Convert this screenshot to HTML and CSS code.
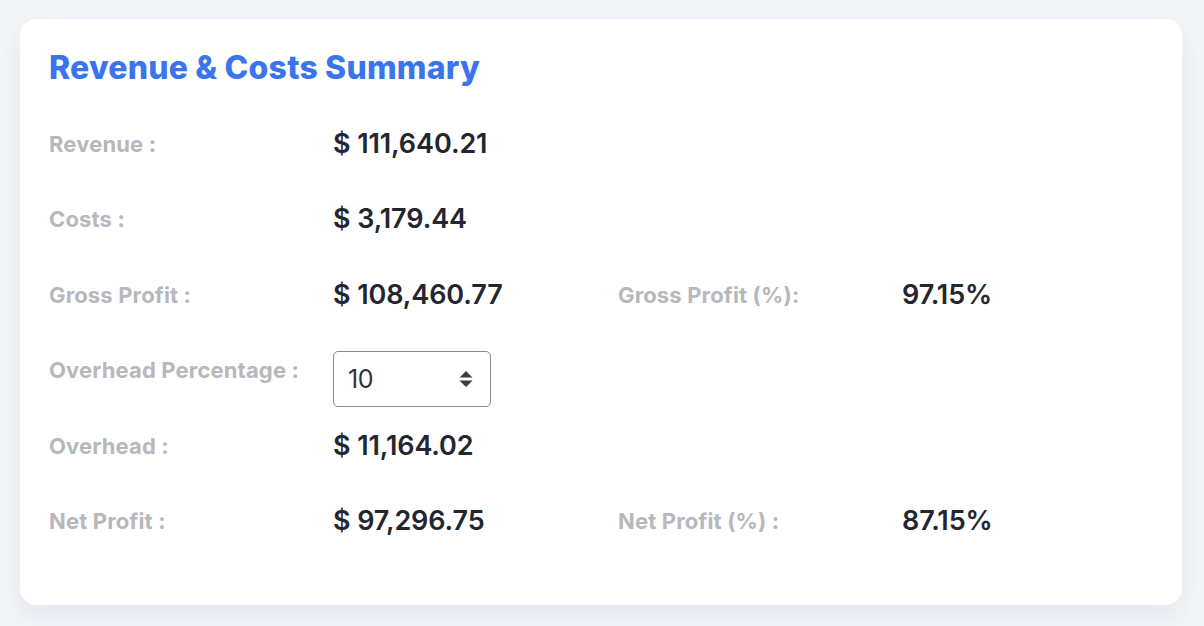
FILE: index.html
```html
<!DOCTYPE html>
<html>
<head>
<meta charset="utf-8">
<link rel="stylesheet" href="styles.css">
</head>
<body>
<div class="card">
  <h1 class="title">Revenue &amp; Costs Summary</h1>
  <div class="grid">
    <div class="label">Revenue :</div>
    <div class="value">$ 111,640.21</div>
    <div></div><div></div>

    <div class="label">Costs :</div>
    <div class="value">$ 3,179.44</div>
    <div></div><div></div>

    <div class="label">Gross Profit :</div>
    <div class="value">$ 108,460.77</div>
    <div class="label">Gross Profit (%):</div>
    <div class="value">97.15%</div>

    <div class="label">Overhead Percentage :</div>
    <div class="value">
      <div class="spin">
        <span class="spin-val">10</span>
        <svg class="spin-arrows" width="14" height="20" viewBox="0 0 14 20"><path d="M7 2 L13.5 8.5 H0.5 Z M7 18 L13.5 11.5 H0.5 Z" fill="#3a3d42"/></svg>
      </div>
    </div>
    <div></div><div></div>

    <div class="label">Overhead :</div>
    <div class="value">$ 11,164.02</div>
    <div></div><div></div>

    <div class="label">Net Profit :</div>
    <div class="value">$ 97,296.75</div>
    <div class="label">Net Profit (%) :</div>
    <div class="value">87.15%</div>
  </div>
</div>
</body>
</html>
```

FILE: styles.css
```css
html, body {
  margin: 0;
  padding: 0;
}
body {
  background: #f4f5f9;
  font-family: Inter, "Liberation Sans", sans-serif;
  width: 1204px;
  height: 626px;
  overflow: hidden;
}
.card {
  box-sizing: border-box;
  margin: 19px 0 0 20px;
  width: 1162px;
  height: 586px;
  background: #ffffff;
  border-radius: 16px;
  box-shadow: 0 10px 24px rgba(30, 40, 80, 0.07);
  padding: 29px 29px 0 29px;
}
.title {
  margin: 0;
  font-size: 32px;
  line-height: 40px;
  font-weight: 800;
  color: #3a75ef;
  letter-spacing: 0.2px;
}
.grid {
  margin-top: 42px;
  display: grid;
  grid-template-columns: 284px 285px 284px 200px;
  grid-auto-rows: 75.4px;
  align-items: start;
}
.label {
  font-size: 22px;
  line-height: 28px;
  font-weight: 700;
  color: #b6b8bc;
  letter-spacing: 0.15px;
}
.value {
  font-size: 27px;
  line-height: 28px;
  font-weight: 600;
  color: #23262e;
  letter-spacing: -0.1px;
}
.spin {
  box-sizing: border-box;
  width: 158px;
  height: 56px;
  margin-top: -5px;
  border: 1.5px solid #8a8b8e;
  border-radius: 5px;
  display: flex;
  align-items: center;
  justify-content: space-between;
  padding: 0 17px 0 14px;
}
.spin-val {
  font-size: 25px;
  font-weight: 400;
  color: #2f3238;
  letter-spacing: -0.3px;
}
.spin-arrows {
  display: block;
}
```
